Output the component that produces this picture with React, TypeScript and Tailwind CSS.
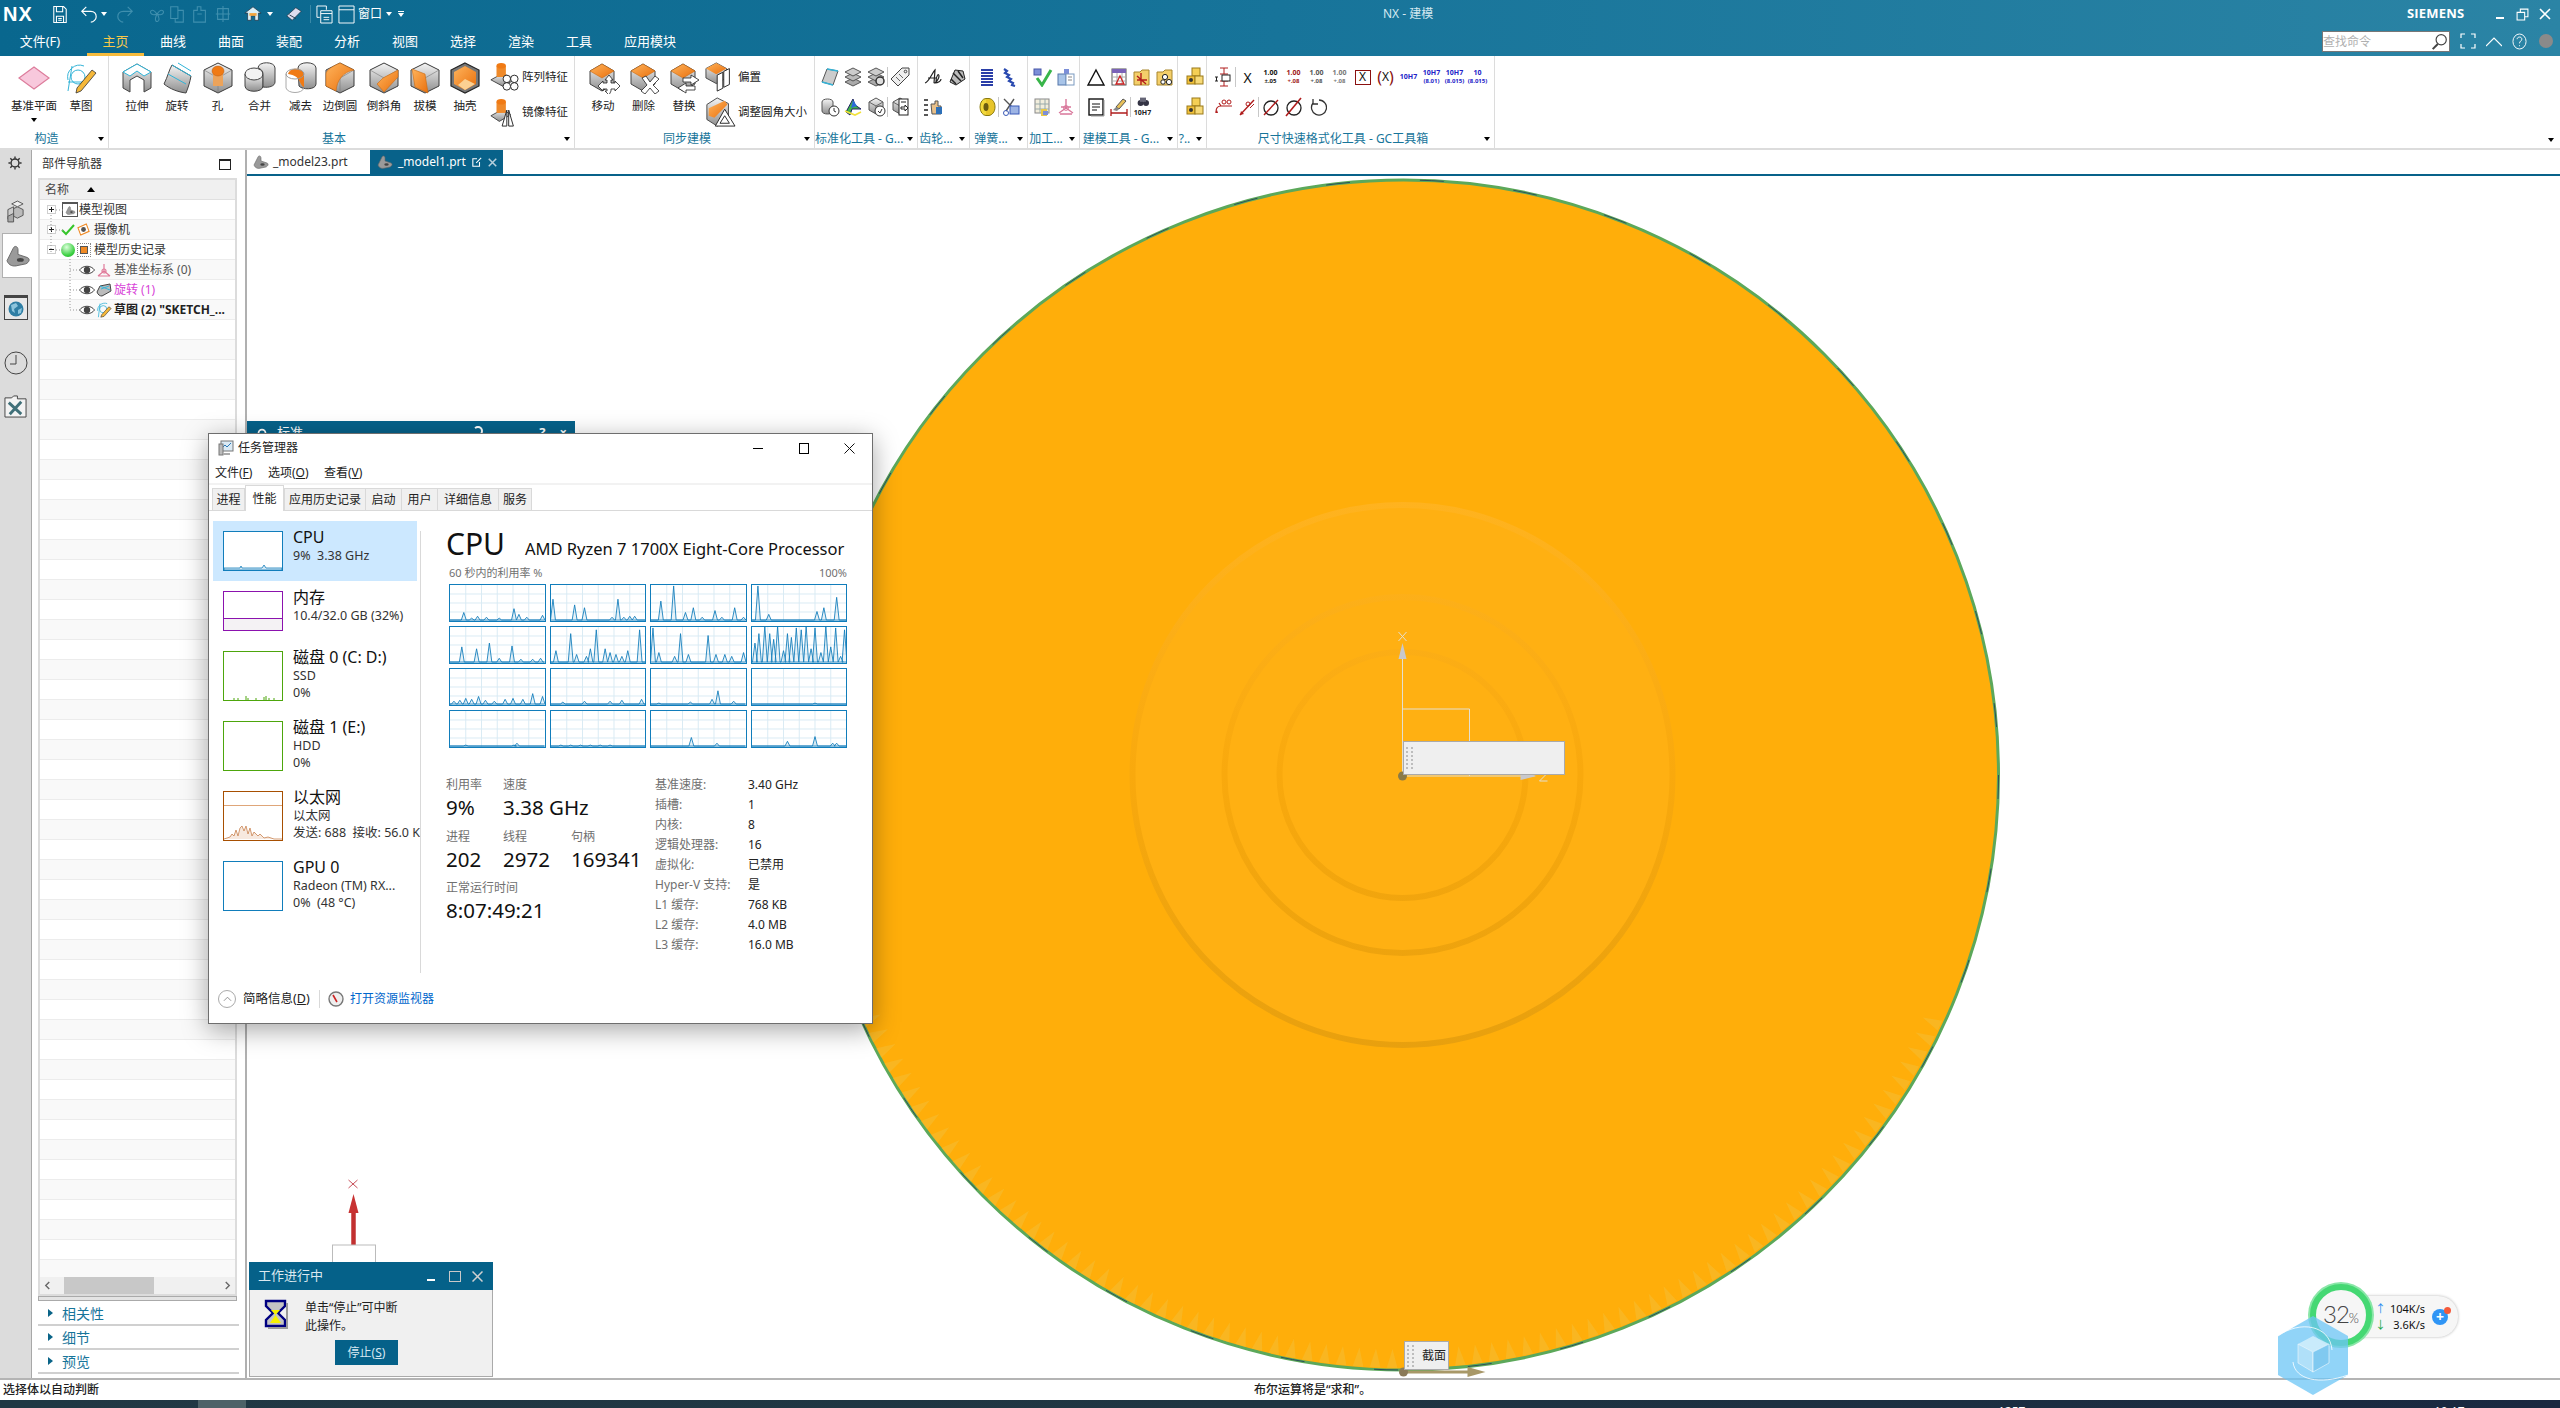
import type { ReactNode } from "react";

const Arrow = ({ className = "border-t-black" }: { className?: string }) => (
  <span className={`block w-0 h-0 border-x-[3px] border-x-transparent border-t-[4px] ${className}`} />
);

const Sep = () => <div className="w-px h-[20px] bg-[#c8c8c8] self-center" />;

const Large = ({ children, className = "w-[34px] h-[32px]" }: { children: ReactNode; className?: string }) => (
  <svg viewBox="0 0 34 32" className={className} fill="none">
    {children}
  </svg>
);

const HEX = "17,1 31,8 31,24 17,31 3,24 3,8";

const Hex = ({ children }: { children?: ReactNode }) => (
  <>
    <polygon points={HEX} fill="url(#gry)" stroke="#3a3a3a" />
    <polyline points="3,8 17,16 31,8" stroke="#777" strokeWidth="0.6" />
    <line x1="17" y1="16" x2="17" y2="31" stroke="#777" strokeWidth="0.6" />
    {children}
  </>
);

const OrangeCube = ({ children }: { children?: ReactNode }) => (
  <>
    <polygon points="16,2 28,9 28,22 16,29 4,22 4,9" fill="url(#gry)" stroke="#444" />
    <polygon points="16,2 28,9 16,16 4,9" fill="url(#org)" stroke="#c96a10" strokeWidth="0.6" />
    {children}
  </>
);

const icons: Record<string, ReactNode> = {
  plane: <polygon points="2,16 17,5 32,16 17,27" fill="#f8c8dc" stroke="#dd7d9c" strokeWidth="1.2" />,
  sketch: (
    <>
      <path d="M4 18 A12 12 0 0 1 20 4 M8 4 L4 29 M4 20 L22 20" stroke="#35b4d8" strokeWidth="1" />
      <circle cx="14" cy="15" r="7" stroke="#35b4d8" />
      <path d="M28 8 L32 11 L17 29 L12 31 L13 26 Z" fill="#f5b83a" stroke="#333" strokeWidth="0.8" />
    </>
  ),
  extrude: (
    <>
      <path d="M3 10 L17 2 L31 10 V26 L24 30 V18 L17 14 L10 18 V30 L3 26Z" fill="url(#gry)" stroke="#444" />
      <path d="M3 10 L17 2 L31 10 L24 14 L17 9 L10 14Z" fill="#fff" stroke="#2fb4d8" />
    </>
  ),
  revolve: (
    <>
      <path d="M4 22 C8 14 9 8 12 3 L31 14 C30 20 28 26 26 31 C18 30 10 27 4 22Z" fill="url(#gry)" stroke="#444" />
      <path d="M12 3 L31 14 M8 12 L26 22 M18 1 L31 9" stroke="#2fb4d8" />
    </>
  ),
  hole: (
    <Hex>
      <rect x="12" y="9" width="10" height="15" fill="#eca35a" />
      <ellipse cx="17" cy="9" rx="6" ry="5" fill="#f07a14" stroke="#b85a10" strokeWidth="0.5" />
    </Hex>
  ),
  unite: (
    <>
      <path d="M2 12 V24 C2 31 20 31 20 24 V12 Z" fill="url(#gry)" stroke="#444" />
      <ellipse cx="11" cy="12" rx="9" ry="6" fill="#f2f2f2" stroke="#444" />
      <path d="M15 6 C15 -1 32 -1 32 6 V20 C32 24 26 26 20 25 V12 C20 9 18 7 15 6Z" fill="url(#gry)" stroke="#444" />
    </>
  ),
  subtract: (
    <>
      <path d="M14 6 C14 -1 32 -1 32 6 V22 C32 28 18 28 15 24Z" fill="url(#gry)" stroke="#444" />
      <path d="M4 12 C6 5 18 5 20 12 V25 C14 22 18 14 4 12Z" fill="#f07a14" />
      <path d="M2 12 V26 C4 32 18 32 20 26" stroke="#aaa" />
      <ellipse cx="11" cy="12" rx="9" ry="5" stroke="#999" />
    </>
  ),
  blend: (
    <Hex>
      <path d="M3 24 V12 C3 8 10 4 17 1 L31 8 C20 10 14 18 13 29Z" fill="url(#org)" stroke="#c96a10" strokeWidth="0.6" />
    </Hex>
  ),
  chamfer: (
    <Hex>
      <polygon points="16,16 31,8 31,15 17,30 10,22" fill="url(#org)" stroke="#c96a10" strokeWidth="0.6" />
    </Hex>
  ),
  draft: (
    <Hex>
      <polygon points="4,7 17,12 20,31 7,25" fill="url(#org)" stroke="#c96a10" strokeWidth="0.6" />
    </Hex>
  ),
  shell: (
    <>
      <polygon points={HEX} fill="#777" stroke="#222" strokeWidth="1.2" />
      <polygon points="17,4 28,10 28,22 17,28 6,22 6,10" fill="url(#org)" />
      <polygon points="10,23 17,17 27,22 17,28" fill="#fbd193" />
    </>
  ),
  pattern: (
    <>
      <polygon points="3,19 16,12 28,19 16,26" fill="url(#gry)" stroke="#444" />
      <rect x="9" y="4" width="10" height="12" fill="#ef8a2a" />
      <ellipse cx="14" cy="4" rx="5" ry="3" fill="#f07a14" />
      <circle cx="20" cy="18" r="4" fill="#fff" stroke="#222" />
      <circle cx="28" cy="18" r="4" fill="#fff" stroke="#222" />
      <circle cx="20" cy="26" r="4" fill="#fff" stroke="#222" />
      <circle cx="28" cy="26" r="4" fill="#fff" stroke="#222" />
    </>
  ),
  mirror: (
    <>
      <polygon points="3,20 16,13 24,19 12,26" fill="url(#gry)" stroke="#444" />
      <rect x="9" y="5" width="10" height="12" fill="#ef8a2a" />
      <ellipse cx="14" cy="5" rx="5" ry="3" fill="#f07a14" />
      <polygon points="20,14 15,31 20,31" fill="#fff" stroke="#222" />
      <polygon points="22,14 27,31 22,31" fill="#fff" stroke="#222" />
    </>
  ),
  move: (
    <OrangeCube>
      <path d="M23 13 L27 18 H25 V21 H29 V19 L34 24 L29 29 V27 H25 V29 L23 33 L19 29 H21 V27 H17 V29 L12 24 L17 19 V21 H21 V18 H19Z" fill="#fff" stroke="#222" strokeWidth="0.8" />
    </OrangeCube>
  ),
  remove: (
    <OrangeCube>
      <path d="M15 16 L19 14 L23 20 L28 14 L32 17 L26 23 L32 29 L28 32 L23 26 L18 32 L14 29 L20 23Z" fill="#fff" stroke="#222" strokeWidth="0.8" />
    </OrangeCube>
  ),
  replace: (
    <OrangeCube>
      <path d="M24 13 L32 18 L24 23 V20 H16 V16 H24Z" fill="#fff" stroke="#222" strokeWidth="0.8" />
      <path d="M19 21 V24 H28 V28 H19 V31 L11 26Z" fill="#fff" stroke="#222" strokeWidth="0.8" />
    </OrangeCube>
  ),
  offset: (
    <>
      <polygon points="13,1 24,7 24,17 13,23 2,17 2,7" fill="url(#gry)" stroke="#444" />
      <polygon points="13,1 24,7 13,13 2,7" fill="url(#org)" />
      <path d="M14 14 L20 11 V28 L14 31Z" fill="#fff" stroke="#222" />
      <path d="M21 10 L27 7 V24 L21 27Z" fill="#fff" stroke="#222" />
    </>
  ),
  resize: (
    <>
      <polygon points="14,1 26,7 26,24 14,31 3,24 3,8" fill="url(#gry)" stroke="#444" />
      <path d="M5 12 L22 4 L25 8 L11 22 L5 20Z" fill="url(#org)" />
      <polygon points="22,13 33,31 12,31" fill="#fff" stroke="#222" />
      <polygon points="22,20 27,28 17,28" stroke="#222" />
    </>
  ),
};

const Small = ({ children, className = "w-[20px] h-[20px]" }: { children: ReactNode; className?: string }) => (
  <svg viewBox="0 0 20 20" className={className} fill="none">
    {children}
  </svg>
);

const cubeGray = (
  <>
    <polygon points="10,1 17,5 17,13 10,17 3,13 3,5" fill="url(#gry)" stroke="#555" />
    <polyline points="3,5 10,9 17,5" stroke="#666" />
    <line x1="10" y1="9" x2="10" y2="17" stroke="#666" />
  </>
);

const stack = (
  <>
    <polygon points="10,11 18,15 10,19 2,15" fill="#aaa" stroke="#555" />
    <polygon points="10,6 18,10 10,14 2,10" fill="#bbb" stroke="#555" />
    <polygon points="10,1 18,5 10,9 2,5" fill="#ccc" stroke="#555" />
  </>
);

const folder = <path d="M2 5 H8 L10 3 H17 V18 H2Z" fill="#f4cf6a" stroke="#a8862c" />;

const yellowCubes = (
  <>
    <rect x="8" y="1" width="8" height="8" fill="#f4cf55" stroke="#9a7a1a" />
    <rect x="3" y="9" width="8" height="8" fill="#f2c13a" stroke="#9a7a1a" />
    <rect x="11" y="9" width="8" height="8" fill="#f7da78" stroke="#9a7a1a" />
    <circle cx="7" cy="13" r="2" fill="#333" />
  </>
);

const sm: Record<string, ReactNode> = {
  s1: (
    <>
      <polygon points="7,2 18,4 13,18 2,15" fill="#ccc" stroke="#555" />
      <path d="M7 2 L18 4 M2 15 L13 18" stroke="#35b4d8" strokeWidth="1.5" />
    </>
  ),
  s2: stack,
  s3: (
    <>
      {stack}
      <circle cx="14" cy="14" r="4" fill="#ddd" stroke="#333" strokeWidth="1.5" />
    </>
  ),
  s4: (
    <>
      <path d="M12 1 H19 V8 L8 19 L1 12Z" fill="#eee" stroke="#444" />
      <path d="M9 7 L13 11 M6 10 L10 14" stroke="#666" />
      <circle cx="15.5" cy="4.5" r="1.3" stroke="#444" />
    </>
  ),
  s5: (
    <>
      <path d="M2 5 C2 1 13 1 13 5 V14 C13 18 2 18 2 14Z" fill="url(#gry)" stroke="#555" />
      <circle cx="14" cy="14" r="5" fill="#fff" stroke="#333" />
      <path d="M14 11 V14 L16 15" stroke="#333" />
    </>
  ),
  s6: (
    <>
      <path d="M3 15 L10 2 L12 8 L18 12 L9 12 L7 18Z" fill="#3fb54a" stroke="#226" />
      <path d="M10 3 L14 9 L8 11Z" fill="#2a6bd8" />
      <path d="M2 14 L12 18 L18 15" stroke="#f2e23c" strokeWidth="1.6" />
    </>
  ),
  s7: (
    <>
      {cubeGray}
      <circle cx="14" cy="14" r="5" fill="#fff" stroke="#333" />
      <path d="M12 14 L14 16 L16 12" stroke="#333" />
    </>
  ),
  s8: (
    <>
      {cubeGray}
      <rect x="9" y="2" width="9" height="16" fill="#fff" stroke="#222" />
      <path d="M11 10 H15 V8 L18 11 L15 14 V12 H11Z" fill="#fff" stroke="#222" />
      <path d="M11 5 H16" stroke="#222" />
    </>
  ),
  g1: <path d="M2 16 C6 15 9 6 12 3 L11 16 M5 11 H13 M13 15 C13 8 16 6 16 9 C16 12 13 15 12 16 C15 16 18 14 18 12" stroke="#222" strokeWidth="1.2" />,
  g2: (
    <>
      <path d="M4 15 L9 3 L17 4 L19 12 L10 18Z" fill="#bbb" stroke="#222" />
      <path d="M7 6 L15 14 M12 4 L17 11 M5 12 L10 17" stroke="#222" strokeWidth="1.5" />
    </>
  ),
  g3: (
    <>
      <path d="M1 3 H5 M1 8 H5 M1 13 H5 M1 18 H5" stroke="#222" strokeWidth="1.4" />
      <path d="M8 7 H12 V4 H15 V9 H18 V17 H9Z" fill="#e8c08a" stroke="#555" />
      <rect x="13" y="10" width="6" height="7" fill="#2d70b8" />
    </>
  ),
  sp1: <path d="M4 3 H16 M4 6 H16 M4 9 H16 M4 12 H16 M4 15 H16 M4 18 H16" stroke="#2a3ea8" strokeWidth="1.8" />,
  sp2: <path d="M4 2 L7 4 L5 6 L9 8 L7 10 L11 12 L9 14 L13 16 L12 18 L15 19" stroke="#2a4ab0" strokeWidth="2.2" />,
  sp3: (
    <>
      <ellipse cx="9" cy="10" rx="6" ry="8.5" fill="#f2d83a" stroke="#8a7a10" />
      <path d="M9 1.5 H12 C16 2 18 6 18 10 C18 15 15 18 12 18.5 H9" fill="#e8c52a" stroke="#8a7a10" />
      <ellipse cx="9" cy="10" rx="2.5" ry="4" fill="#6a5a10" />
    </>
  ),
  sp4: (
    <>
      <path d="M3 2 L17 16 M13 2 L5 14" stroke="#555" strokeWidth="1.4" />
      <rect x="9" y="9" width="9" height="8" fill="#9db4e4" stroke="#3a5ab8" />
      <circle cx="5" cy="16" r="2.5" stroke="#3a5ab8" />
    </>
  ),
  m1: (
    <>
      <rect x="1" y="2" width="7" height="6" fill="#7c8fd8" stroke="#4656a8" />
      <path d="M4 11 L9 18 L18 3" stroke="#39b54a" strokeWidth="3" />
    </>
  ),
  m2: (
    <>
      <rect x="2" y="7" width="8" height="11" fill="#a8c4e8" stroke="#5577aa" />
      <rect x="8" y="2" width="5" height="5" fill="#7c8fd8" />
      <rect x="10" y="7" width="8" height="11" fill="#fff" stroke="#7a9ac0" />
      <path d="M12 10 H16 M12 13 H16" stroke="#888" />
    </>
  ),
  m3: (
    <>
      <rect x="2" y="2" width="14" height="14" fill="#f2eedd" stroke="#888" />
      <path d="M2 7 H16 M2 12 H16 M7 2 V16 M12 2 V16" stroke="#9aa" />
      <rect x="8" y="12" width="6" height="7" fill="#e8c94a" />
      <rect x="10" y="14" width="5" height="4" fill="#7c8fd8" />
    </>
  ),
  m4: (
    <>
      <path d="M10 2 V11 L3 16 M10 11 L17 16 M5 10 L15 10 M4 17 H16" stroke="#d9779b" strokeWidth="1.4" />
      <circle cx="10" cy="11" r="2.4" stroke="#d9779b" />
    </>
  ),
  a1: <polygon points="10,3 18,18 2,18" stroke="#111" strokeWidth="1.4" />,
  a2: (
    <>
      <rect x="3" y="2" width="14" height="16" fill="#fff" stroke="#555" />
      <rect x="3" y="2" width="14" height="4" fill="#7a63b8" />
      <path d="M3 10 H17 M3 14 H17 M8 6 V18 M13 6 V18" stroke="#aaa" />
      <polygon points="11,9 15,17 7,17" stroke="#c22" strokeWidth="1.3" />
    </>
  ),
  a3: (
    <>
      {folder}
      <path d="M9 6 V18 M5 13 H15 M5 9 L14 17" stroke="#b21c1c" strokeWidth="1.4" />
    </>
  ),
  a4: (
    <>
      {folder}
      <circle cx="10" cy="10" r="2.6" fill="#fff" stroke="#222" />
      <circle cx="14" cy="15" r="2.6" fill="#fff" stroke="#222" />
      <circle cx="8" cy="15" r="2.2" fill="#fff" stroke="#222" />
    </>
  ),
  a5: (
    <>
      <rect x="3" y="2" width="14" height="16" fill="#fff" stroke="#111" strokeWidth="1.4" />
      <path d="M6 7 H14 M6 10 H14 M6 13 H11" stroke="#111" />
      <path d="M18 3 V19 H5" stroke="#999" />
    </>
  ),
  a6: (
    <>
      <path d="M14 2 L17 4 L10 12 L7 10Z" fill="#e8c05a" stroke="#555" />
      <path d="M7 10 L10 12 L8 14 L4 13Z" fill="#888" />
      <path d="M2 12 V19 M18 12 V19 M2 16 H18" stroke="#b01c1c" strokeWidth="1.3" />
    </>
  ),
  q: yellowCubes,
  d1: (
    <>
      <path d="M6 1 H14 M6 7 H14 M10 1 V7 M6 14 H14 M6 19 H14 M10 14 V19" stroke="#b01c1c" />
      <rect x="8" y="8" width="8" height="6" fill="#fff" stroke="#222" />
      <path d="M1 10 H4 M1 14 H4 M2.5 10 V14" stroke="#222" />
    </>
  ),
  d2: (
    <>
      <path d="M2 15 C2 10 4 9 7 9 H18 M7 9 L5 6" stroke="#b01c1c" strokeWidth="1.2" />
      <path d="M3 13 L1 16 L4 16Z" fill="#b01c1c" />
      <circle cx="10" cy="5" r="2" stroke="#b01c1c" />
      <circle cx="15" cy="5" r="2" stroke="#b01c1c" />
    </>
  ),
  d3: (
    <>
      <path d="M3 18 L17 3" stroke="#b01c1c" strokeWidth="1.4" />
      <path d="M3 18 L7 17 L4 14Z" fill="#b01c1c" />
      <circle cx="11" cy="7" r="2" stroke="#b01c1c" />
      <path d="M13 11 L17 7" stroke="#b01c1c" />
    </>
  ),
  d4: (
    <>
      <circle cx="10" cy="11" r="7" stroke="#222" strokeWidth="1.3" />
      <path d="M3 18 L17 3" stroke="#b01c1c" strokeWidth="1.4" />
    </>
  ),
  d5: (
    <>
      <circle cx="10" cy="11" r="7" stroke="#222" strokeWidth="1.3" />
      <path d="M2 19 L17 1" stroke="#b01c1c" strokeWidth="1.6" />
    </>
  ),
  d6: <path d="M6 6 A7.5 7.5 0 1 0 12 3 M6 2 L6 7 L11 7" stroke="#333" strokeWidth="1.3" />,
};

const SmallCell = ({ name }: { name: string }) => (
  <div className="w-[23px] h-[30px] flex items-center justify-center shrink-0">
    <Small>{sm[name]}</Small>
  </div>
);

const TextCell = ({ top, bottom, className }: { top: string; bottom?: string; className: string }) => (
  <div className="w-[23px] h-[30px] shrink-0 flex flex-col items-center justify-center text-[7px] leading-[8px] font-bold">
    <span className={className}>{top}</span>
    {bottom && <span className={`${className} text-[6px]`}>{bottom}</span>}
  </div>
);

const Group = ({ width, label, children }: { width: string; label: string; children: ReactNode }) => (
  <div className={`${width} shrink-0 flex flex-col relative pt-[6px] border-r border-[#dcdcdc]`}>
    <div className="h-[69px] flex flex-col">{children}</div>
    <div className="h-[18px] flex items-center text-[12px] leading-[18px] text-[#17759a]">
      <span className="flex-1 text-center whitespace-nowrap">{label}</span>
      <span className="w-[15px] flex justify-center">
        <Arrow />
      </span>
    </div>
  </div>
);

const LargeBtn = ({ w, icon, label }: { w: string; icon: string; label: string }) => (
  <div className={`${w} flex flex-col items-center shrink-0`}>
    <Large>{icons[icon]}</Large>
    <span className="mt-[4px] h-[16px] text-[11.5px] leading-[16px] text-[#222] whitespace-nowrap">{label}</span>
  </div>
);

const SideBtn = ({ icon, label }: { icon: string; label: string }) => (
  <div className="h-[35px] flex items-center whitespace-nowrap">
    <Large className="w-[32px] h-[30px] shrink-0">{icons[icon]}</Large>
    <span className="ml-[2px] text-[11.5px] text-[#222]">{label}</span>
  </div>
);

function Ribbon() {
  return (
    <div className="h-[94px] shrink-0 bg-white border-b-2 border-[#dcdcdc] flex">
      <Group width="w-[109px]" label="构造">
        <div className="flex">
          <div className="w-[68px] flex flex-col items-center">
            <Large>{icons.plane}</Large>
            <span className="mt-[4px] h-[16px] text-[11.5px] leading-[16px] text-[#222]">基准平面</span>
            <span className="mt-[4px]">
              <Arrow />
            </span>
          </div>
          <LargeBtn w="w-[26px]" icon="sketch" label="草图" />
        </div>
      </Group>
      <Group width="w-[466px]" label="基本">
        <div className="flex pl-[8px]">
          <LargeBtn w="w-[40px]" icon="extrude" label="拉伸" />
          <LargeBtn w="w-[40px]" icon="revolve" label="旋转" />
          <LargeBtn w="w-[41px]" icon="hole" label="孔" />
          <LargeBtn w="w-[43px]" icon="unite" label="合并" />
          <LargeBtn w="w-[39px]" icon="subtract" label="减去" />
          <LargeBtn w="w-[40px]" icon="blend" label="边倒圆" />
          <LargeBtn w="w-[48px]" icon="chamfer" label="倒斜角" />
          <LargeBtn w="w-[34px]" icon="draft" label="拔模" />
          <LargeBtn w="w-[46px]" icon="shell" label="抽壳" />
          <div className="flex flex-col -mt-[3px]">
            <SideBtn icon="pattern" label="阵列特征" />
            <SideBtn icon="mirror" label="镜像特征" />
          </div>
        </div>
      </Group>
      <Group width="w-[240px]" label="同步建模">
        <div className="flex pl-[8px]">
          <LargeBtn w="w-[40px]" icon="move" label="移动" />
          <LargeBtn w="w-[41px]" icon="remove" label="删除" />
          <LargeBtn w="w-[40px]" icon="replace" label="替换" />
          <div className="flex flex-col -mt-[3px]">
            <SideBtn icon="offset" label="偏置" />
            <SideBtn icon="resize" label="调整圆角大小" />
          </div>
        </div>
      </Group>
      <Group width="w-[103px]" label="标准化工具 - G...">
        <div className="flex pl-[3px]">
          <SmallCell name="s1" />
          <SmallCell name="s2" />
          <SmallCell name="s3" />
          <Sep />
          <SmallCell name="s4" />
        </div>
        <div className="flex pl-[3px]">
          <SmallCell name="s5" />
          <SmallCell name="s6" />
          <SmallCell name="s7" />
          <Sep />
          <SmallCell name="s8" />
        </div>
      </Group>
      <Group width="w-[52px]" label="齿轮...">
        <div className="flex pl-[3px]">
          <SmallCell name="g1" />
          <SmallCell name="g2" />
        </div>
        <div className="flex pl-[3px]">
          <SmallCell name="g3" />
        </div>
      </Group>
      <Group width="w-[58px]" label="弹簧...">
        <div className="flex pl-[5px]">
          <SmallCell name="sp1" />
          <SmallCell name="sp2" />
        </div>
        <div className="flex pl-[5px]">
          <SmallCell name="sp3" />
          <Sep />
          <SmallCell name="sp4" />
        </div>
      </Group>
      <Group width="w-[52px]" label="加工...">
        <div className="flex pl-[3px]">
          <SmallCell name="m1" />
          <SmallCell name="m2" />
        </div>
        <div className="flex pl-[3px]">
          <SmallCell name="m3" />
          <SmallCell name="m4" />
        </div>
      </Group>
      <Group width="w-[98px]" label="建模工具 - G...">
        <div className="flex pl-[4px]">
          <SmallCell name="a1" />
          <SmallCell name="a2" />
          <SmallCell name="a3" />
          <SmallCell name="a4" />
        </div>
        <div className="flex pl-[4px]">
          <SmallCell name="a5" />
          <SmallCell name="a6" />
          <Sep />
          <div className="w-[23px] h-[30px] flex flex-col items-center justify-center">
            <Small className="w-[14px] h-[12px]">
              <circle cx="6" cy="10" r="5" fill="#334" />
              <circle cx="15" cy="10" r="5" fill="#334" />
              <rect x="5" y="1" width="10" height="7" fill="#667" />
            </Small>
            <span className="text-[7px] leading-[8px] font-bold text-[#222]">10H7</span>
          </div>
        </div>
      </Group>
      <Group width="w-[29px]" label="?..">
        <div className="flex pl-[4px]">
          <SmallCell name="q" />
        </div>
        <div className="flex pl-[4px]">
          <SmallCell name="q" />
        </div>
      </Group>
      <Group width="w-[288px]" label="尺寸快速格式化工具 - GC工具箱">
        <div className="flex pl-[5px]">
          <SmallCell name="d1" />
          <Sep />
          <div className="w-[23px] h-[30px] flex items-center justify-center text-[14px] text-[#111]">X</div>
          <TextCell top="1.00" bottom="±.05" className="text-[#111]" />
          <TextCell top="1.00" bottom="+.08" className="text-[#a01818]" />
          <TextCell top="1.00" bottom="+.08" className="text-[#555]" />
          <TextCell top="1.00" bottom="+.08" className="text-[#777]" />
          <div className="w-[23px] h-[30px] flex items-center justify-center">
            <div className="w-[16px] h-[15px] border border-[#8a1010] flex items-center justify-center text-[12px] text-[#111]">X</div>
          </div>
          <div className="w-[23px] h-[30px] flex items-center justify-center text-[12px] text-[#111]">
            <span className="text-[#8a1010] text-[16px] leading-none">(</span>X<span className="text-[#8a1010] text-[16px] leading-none">)</span>
          </div>
          <TextCell top="10H7" className="text-[#2222c8]" />
          <TextCell top="10H7" bottom="(8.01)" className="text-[#2222c8]" />
          <TextCell top="10H7" bottom="(8.015)" className="text-[#2222c8]" />
          <TextCell top="10" bottom="(8.015)" className="text-[#2222c8]" />
        </div>
        <div className="flex pl-[5px]">
          <SmallCell name="d2" />
          <SmallCell name="d3" />
          <Sep />
          <SmallCell name="d4" />
          <SmallCell name="d5" />
          <SmallCell name="d6" />
        </div>
      </Group>
      <div className="flex-1 flex items-end justify-end pr-[6px] pb-[6px]">
        <Arrow />
      </div>
    </div>
  );
}

const PartIcon = ({ className = "w-[16px] h-[14px]" }: { className?: string }) => (
  <svg viewBox="0 0 16 14" className={className}>
    <path d="M1 10 L5 2 C6 0 8 1 8 3 L8 6 L14 8 C16 9 15 11 13 12 L8 13 C5 14 2 13 1 10Z" fill="#9a9a9a" stroke="#666" strokeWidth="0.6" />
    <ellipse cx="9.5" cy="9.5" rx="2.2" ry="1.2" fill="#444" />
  </svg>
);

function TitleBar() {
  const dim = "stroke-[#3f8fae]";
  return (
    <div className="h-[56px] shrink-0 bg-[linear-gradient(90deg,#09678e,#17749a_50%,#2b84a5)] text-white">
      <div className="h-[28px] flex items-center">
        <span className="w-[52px] pl-[3px] text-[20px] font-bold leading-none tracking-[1px] font-['Liberation_Sans',sans-serif]">NX</span>
        <div className="w-[1331px] flex items-center relative h-full">
          <svg viewBox="0 0 18 20" className="w-[16px] h-[19px]" fill="none" stroke="#fff" strokeWidth="1.2">
            <path d="M2 1 H13 L16 4 V19 H2Z M5 1 V7 H12 V1 M5 12 H13 V19 H5Z M7 14.5 H11 M7 16.5 H11" />
          </svg>
          <svg viewBox="0 0 20 20" className="w-[18px] h-[18px] ml-[12px]" fill="none" stroke="#fff" strokeWidth="1.3">
            <path d="M7 2 L2 7 L7 12 M2 7 H12 C16 7 18 10 18 13 C18 16 15 19 12 19" />
          </svg>
          <span className="ml-[3px]"><Arrow className="border-t-white" /></span>
          <svg viewBox="0 0 20 20" className={`w-[18px] h-[18px] ml-[9px] ${dim}`} fill="none" strokeWidth="1.3">
            <path d="M13 2 L18 7 L13 12 M18 7 H8 C4 7 2 10 2 13 C2 16 5 19 8 19" />
          </svg>
          <svg viewBox="0 0 20 20" className={`w-[18px] h-[18px] ml-[14px] ${dim}`} fill="none" strokeWidth="1.2">
            <path d="M10 10 C4 2 1 8 4 10 C7 12 9 10 10 10 C16 2 19 8 16 10 C13 12 11 10 10 10 C6 18 10 20 12 17 C13 15 11 11 10 10" />
          </svg>
          <svg viewBox="0 0 20 20" className={`w-[18px] h-[18px] ml-[2px] ${dim}`} fill="none" strokeWidth="1.2">
            <path d="M3 2 H11 V15 H3Z M11 6 H17 V19 H8 V15" />
          </svg>
          <svg viewBox="0 0 20 20" className={`w-[18px] h-[18px] ml-[5px] ${dim}`} fill="none" strokeWidth="1.2">
            <path d="M3 6 H7 V2 H11 V6 H16 V19 H3Z M7 10 H12" />
          </svg>
          <svg viewBox="0 0 20 20" className={`w-[18px] h-[18px] ml-[5px] ${dim}`} fill="none" strokeWidth="1.2">
            <path d="M10 1 V19 M2 10 H18 M4 4 H16 V16 H4Z" />
          </svg>
          <svg viewBox="0 0 20 20" className="w-[18px] h-[18px] ml-[12px]">
            <path d="M10 2 L19 9 L16 9 V17 H12 V12 H8 V17 H4 V9 H1Z" fill="#d8eef6" stroke="#234" strokeWidth="0.8" />
            <path d="M6 9 H14 V12 H6Z" fill="#f2a33c" />
          </svg>
          <span className="ml-[5px]"><Arrow className="border-t-white" /></span>
          <svg viewBox="0 0 20 20" className="w-[18px] h-[18px] ml-[12px]">
            <path d="M2 12 L12 3 L18 7 L8 17Z" fill="#dde" stroke="#234" strokeWidth="0.8" />
            <path d="M5 11 L12 15" stroke="#234" />
          </svg>
          <div className="w-px h-[18px] bg-[#3a8aa8] ml-[7px]" />
          <svg viewBox="0 0 18 20" className="w-[17px] h-[19px] ml-[5px]" fill="none" stroke="#fff">
            <path d="M1 1 H11 V5 M1 1 V13 H4 M5 6 H17 V19 H5Z M5 9 H17 M8 13 H14 M8 15.5 H14" />
          </svg>
          <svg viewBox="0 0 18 20" className="w-[17px] h-[19px] ml-[5px]" fill="none" stroke="#fff">
            <path d="M1 1 H17 V19 H1Z M1 5 H17" />
          </svg>
          <span className="ml-[3px] text-[12px]">窗口</span>
          <span className="ml-[4px]"><Arrow className="border-t-white" /></span>
          <span className="ml-[6px] flex flex-col items-center gap-[1px]">
            <span className="w-[6px] h-px bg-white" />
            <Arrow className="border-t-white" />
          </span>
        </div>
        <span className="w-[55px] text-[12px] text-[#d4e8f0] whitespace-nowrap">NX - 建模</span>
        <span className="ml-[969px] w-[64px] text-[13px] font-bold font-['Open_Sans',sans-serif] tracking-[0.2px]">SIEMENS</span>
        <div className="ml-[25px] flex items-center text-white">
          <span className="w-[8px] h-[2px] bg-white mt-[7px]" />
          <svg viewBox="0 0 12 12" className="w-[13px] h-[13px] ml-[12px]" fill="none" stroke="#fff" strokeWidth="1">
            <path d="M1 4 H8 V11 H1Z M4 4 V1 H11 V8 H8" />
          </svg>
          <svg viewBox="0 0 12 12" className="w-[12px] h-[12px] ml-[10px]" fill="none" stroke="#fff" strokeWidth="1.6">
            <path d="M1 1 L11 11 M11 1 L1 11" />
          </svg>
        </div>
      </div>
      <div className="h-[28px] flex items-start text-[13px] leading-[26px]">
        <span className="w-[87px] pr-[7px] text-center">文件(F)</span>
        <span className="w-[57px] h-[28px] text-center text-[#f8c84a] border-b-[3px] border-[#f6bb3c]">主页</span>
        {["曲线", "曲面", "装配", "分析", "视图", "选择", "渲染", "工具"].map((t) => (
          <span key={t} className="w-[58px] text-center">{t}</span>
        ))}
        <span className="w-[84px] text-center">应用模块</span>
        <div className="ml-[1630px] mt-[3px] w-[128px] h-[21px] bg-white border border-[#777] flex items-center justify-between pr-[1px]">
          <span className="text-[12px] leading-none text-[#b0b0b0]">查找命令</span>
          <svg viewBox="0 0 20 20" className="w-[17px] h-[17px]" fill="none" stroke="#444" strokeWidth="1.4">
            <circle cx="12" cy="8" r="6" />
            <path d="M8 13 L2 19" strokeWidth="2.4" />
          </svg>
        </div>
        <svg viewBox="0 0 16 16" className="w-[16px] h-[16px] ml-[10px] mt-[5px]" fill="none" stroke="#fff" strokeWidth="1.2">
          <path d="M1 5 V1 H5 M11 1 H15 V5 M15 11 V15 H11 M5 15 H1 V11" />
        </svg>
        <svg viewBox="0 0 16 10" className="w-[16px] h-[10px] ml-[10px] mt-[9px]" fill="none" stroke="#fff" strokeWidth="1.2">
          <path d="M0 9 L8 1 L16 9" />
        </svg>
        <svg viewBox="0 0 16 18" className="w-[15px] h-[17px] ml-[10px] mt-[5px]" fill="none" stroke="#fff" strokeWidth="1">
          <ellipse cx="8" cy="9" rx="7" ry="8" />
          <path d="M5.5 6.5 C5.5 3.5 10.5 3.5 10.5 6.5 C10.5 8.5 8 8.5 8 11 M8 13 V14" />
        </svg>
        <span className="w-[14px] h-[14px] ml-[12px] mt-[6px] rounded-full bg-[#8a8a8a]" />
      </div>
    </div>
  );
}

function LeftStrip() {
  return (
    <div className="w-[32px] shrink-0 bg-[#dcdcdc] border-r border-[#a8a8a8] flex flex-col items-center">
      <svg viewBox="0 0 16 16" className="w-[14px] h-[14px] mt-[6px] mr-[1px]" fill="none" stroke="#333" strokeWidth="1.6">
        <circle cx="8" cy="8" r="4.5" />
        <path d="M8 0.5 V3 M8 13 V15.5 M0.5 8 H3 M13 8 H15.5 M2.7 2.7 L4.5 4.5 M11.5 11.5 L13.3 13.3 M2.7 13.3 L4.5 11.5 M11.5 4.5 L13.3 2.7" />
      </svg>
      <svg viewBox="0 0 20 24" className="w-[19px] h-[23px] mt-[30px]">
        <polygon points="6,10 12,7 18,10 18,16 12,19 6,16" fill="#bbb" stroke="#555" />
        <polygon points="6,4 12,1 18,4 12,7 6,4" fill="#eee" stroke="#555" />
        <polygon points="2,10 8,7 8,17 2,20" fill="#ccc" stroke="#555" />
        <polygon points="2,17 8,14 8,23 2,23" fill="#aaa" stroke="#555" />
      </svg>
      <div className="mt-[10px] self-end w-[30px] h-[45px] bg-white border-y border-l border-[#b0b0b0] -mr-px flex items-center justify-center">
        <PartIcon className="w-[26px] h-[22px]" />
      </div>
      <div className="mt-[17px] w-[24px] h-[25px] bg-[#e8e8e8] border border-[#444] border-t-[3px] flex items-center justify-center">
        <svg viewBox="0 0 16 16" className="w-[16px] h-[16px]">
          <circle cx="8" cy="8" r="7.5" fill="#2f7ea4" />
          <path d="M3 4 L8 2 L10 5 L6 8 L7 12 L4 10Z M10 9 L14 7 L13 12 L10 13Z" fill="#8cc4dc" />
        </svg>
      </div>
      <svg viewBox="0 0 24 24" className="w-[24px] h-[24px] mt-[31px]" fill="none" stroke="#444" strokeWidth="1">
        <circle cx="12" cy="12" r="11" />
        <path d="M12 4 V13 H6" />
      </svg>
      <svg viewBox="0 0 24 24" className="w-[23px] h-[23px] mt-[20px]">
        <path d="M1 3 H8 L10 1 H14 V4 H23 V23 H1Z" fill="#f3f3f3" stroke="#444" />
        <path d="M5 8 L18 20 M18 7 L6 20" stroke="#3f6f78" strokeWidth="3" />
      </svg>
    </div>
  );
}

const Eye = () => (
  <svg viewBox="0 0 16 12" className="w-[16px] h-[12px] shrink-0">
    <path d="M0.5 6 C4 1 12 1 15.5 6 C12 11 4 11 0.5 6Z" fill="#fff" stroke="#444" />
    <circle cx="8" cy="6" r="3.2" fill="#444" />
  </svg>
);

const Expand = ({ minus }: { minus?: boolean }) => (
  <span className="w-[9px] h-[9px] bg-white border border-[#cfcfcf] flex items-center justify-center text-[10px] leading-none text-[#222] relative shrink-0">
    <span className="w-[5px] h-px bg-[#222]" />
    {!minus && <span className="absolute w-px h-[5px] bg-[#222]" />}
  </span>
);

function Tree() {
  const rowCls = "h-[20px] border-b border-[#ececec] flex items-center text-[12px] leading-none whitespace-nowrap relative";
  return (
    <div className="flex-1 overflow-hidden relative">
      <div className={`${rowCls} pl-[7px]`}>
        <Expand />
        <span className="ml-[6px] w-[16px] h-[15px] bg-white border border-[#555] border-t-[2px] flex items-center justify-center shrink-0">
          <PartIcon className="w-[11px] h-[9px]" />
        </span>
        <span className="ml-[1px] text-[#333]">模型视图</span>
      </div>
      <div className={`${rowCls} pl-[7px] bg-[#f9f9f9]`}>
        <Expand />
        <svg viewBox="0 0 14 12" className="ml-[5px] w-[14px] h-[12px] shrink-0" fill="none" stroke="#35c52a" strokeWidth="2">
          <path d="M1 6 L5 10 L13 1" />
        </svg>
        <svg viewBox="0 0 14 14" className="ml-[2px] w-[13px] h-[13px] shrink-0">
          <polygon points="1,5 10,1 13,9 4,13" fill="#fff" stroke="#f08a24" strokeWidth="1.2" />
          <circle cx="7" cy="7" r="2.6" fill="#555" />
        </svg>
        <span className="ml-[4px] text-[#333]">摄像机</span>
      </div>
      <div className={`${rowCls} pl-[7px]`}>
        <Expand minus />
        <span className="ml-[5px] w-[14px] h-[14px] rounded-full bg-[radial-gradient(circle_at_40%_30%,#dcffdc,#39cf3f_65%,#1f9a28)] shrink-0" />
        <span className="ml-[2px] w-[14px] h-[14px] border border-dotted border-[#888] bg-white flex items-center justify-center shrink-0">
          <span className="w-[8px] h-[8px] bg-[#f08a24] border border-[#555]" />
        </span>
        <span className="ml-[3px] text-[#333]">模型历史记录</span>
      </div>
      <div className={`${rowCls} pl-[39px] bg-[#f9f9f9]`}>
        <Eye />
        <svg viewBox="0 0 16 14" className="ml-[1px] w-[16px] h-[14px] shrink-0" fill="none" stroke="#e07a9a" strokeWidth="1.2">
          <path d="M8 1 V8 L2 13 M8 8 L14 13 M2 13 H14" />
          <circle cx="8" cy="8" r="2" />
        </svg>
        <span className="ml-[2px] text-[#555]">基准坐标系 (0)</span>
      </div>
      <div className={`${rowCls} pl-[39px]`}>
        <Eye />
        <svg viewBox="0 0 16 14" className="ml-[1px] w-[16px] h-[14px] shrink-0">
          <path d="M1 9 L4 3 L14 1 L15 8 L6 13 C4 13 2 12 1 9Z" fill="#bbb" stroke="#444" />
          <path d="M4 3 L14 7 M5 6 L13 3" stroke="#35b4d8" />
        </svg>
        <span className="ml-[2px] text-[#d844d8]">旋转 (1)</span>
      </div>
      <div className={`${rowCls} pl-[39px] bg-[#f9f9f9]`}>
        <Eye />
        <Small className="ml-[1px] w-[16px] h-[16px] shrink-0">
          <path d="M2 11 A9 9 0 0 1 14 2 M5 2 L3 19" stroke="#35b4d8" />
          <circle cx="9" cy="9" r="4.5" stroke="#35b4d8" />
          <path d="M16 6 L19 8 L10 18 L6 19 L7 16Z" fill="#f5b83a" stroke="#333" strokeWidth="0.7" />
        </Small>
        <span className="ml-[2px] font-bold text-[#222]">草图 (2) "SKETCH_...</span>
      </div>
      {Array.from({ length: 54 }, (_, i) => (
        <div key={i} className={`h-[20px] border-b border-[#ececec] ${i % 2 === 1 ? "bg-[#f9f9f9]" : "bg-white"}`} />
      ))}
      <svg className="absolute left-0 top-0 w-[60px] h-[130px]" fill="none" stroke="#999" strokeDasharray="1 2">
        <path d="M11 15 V54 M16 10 H23 M16 30 H23 M16 50 H23 M30 59 V110 H40 M30 70 H40 M30 90 H40" />
      </svg>
    </div>
  );
}

function NavPanel() {
  const sections = ["相关性", "细节", "预览"];
  return (
    <div className="w-[215px] shrink-0 bg-white border-r-2 border-[#b0b0b0] flex flex-col">
      <div className="h-[28px] shrink-0 flex items-center justify-between pl-[10px] pr-[14px] text-[12px] text-[#333]">
        <span>部件导航器</span>
        <span className="w-[12px] h-[11px] border border-[#222] border-t-2" />
      </div>
      <div className="mx-[6px] w-[199px] flex-1 min-h-0 border-2 border-[#dcdcdc] flex flex-col overflow-hidden">
        <div className="h-[20px] shrink-0 bg-[#f0f0f0] border-b border-[#e0e0e0] flex items-center pl-[5px] text-[12px] text-[#444]">
          名称
          <span className="ml-[18px] w-0 h-0 border-x-[4px] border-x-transparent border-b-[5px] border-b-black" />
        </div>
        <Tree />
        <div className="h-[17px] shrink-0 bg-[#f0f0f0] flex items-center justify-between px-[4px]">
          <svg viewBox="0 0 8 10" className="w-[7px] h-[9px]" fill="none" stroke="#666" strokeWidth="1.6"><path d="M6 1 L2 5 L6 9" /></svg>
          <span className="w-[90px] h-full bg-[#c8c8c8] -ml-[58px]" />
          <svg viewBox="0 0 8 10" className="w-[7px] h-[9px]" fill="none" stroke="#666" strokeWidth="1.6"><path d="M2 1 L6 5 L2 9" /></svg>
        </div>
      </div>
      <div className="mx-[6px] w-[199px] h-[5px] shrink-0 bg-[#e4e4e4] border border-[#aaa]" />
      <div className="shrink-0 pb-[4px] pt-[1px]">
        {sections.map((s) => (
          <div key={s} className="mx-[6px] h-[24px] border-b-2 border-[#d0d0d0] flex items-center pl-[10px] text-[14px] text-[#17759a]">
            <span className="w-0 h-0 border-y-[4px] border-y-transparent border-l-[5px] border-l-[#0a6488] mr-[9px]" />
            {s}
          </div>
        ))}
      </div>
    </div>
  );
}

function Canvas() {
  const cx = 1403;
  const cy = 775;
  // small facet slivers along the lower rim of the disc
  const facets = Array.from({ length: 80 }, (_, i) => {
    const a = ((25 + i * 1.65) * Math.PI) / 180;
    const p = (r: number, d: number) => `${cx + r * Math.cos(a + d)},${cy + r * Math.sin(a + d)}`;
    return `${p(593, -0.009)} ${p(574, 0)} ${p(593, 0.009)}`;
  });
  return (
    <svg viewBox="248 176 2312 1202" className="absolute inset-0 w-full h-full">
      <defs>
        <linearGradient id="ring" gradientUnits="userSpaceOnUse" x1="0" y1="500" x2="0" y2="1050">
          <stop offset="0" stopColor="#ffb31f" />
          <stop offset="0.5" stopColor="#f9a90d" />
          <stop offset="1" stopColor="#e8a00e" />
        </linearGradient>
      </defs>
      <circle cx={cx + 1} cy={cy} r="595" fill="#ffae0a" stroke="#5ca85a" strokeWidth="3" />
      <circle cx={cx + 1} cy={cy} r="595" fill="none" stroke="#2f4f5a" strokeWidth="1" strokeDasharray="24 70" />
      {facets.map((pts, i) => (
        <polygon key={i} points={pts} fill="#f2c23e" opacity="0.45" />
      ))}
      <circle cx={cx} cy={cy} r="270" fill="#ffb012" stroke="url(#ring)" strokeWidth="6" />
      <circle cx={cx} cy={cy} r="178" fill="none" stroke="url(#ring)" strokeWidth="6" />
      <circle cx={cx} cy={cy} r="123" fill="none" stroke="url(#ring)" strokeWidth="6" />
      <g stroke="#e4dfd0" strokeWidth="1" fill="none">
        <path d="M1403 655 V776 H1535 M1403 709 H1470 V776" />
        <path d="M1399 632 L1407 641 M1407 632 L1399 641 M1540 773 H1548 L1540 781 H1548" />
      </g>
      <polygon points="1403,643 1399,659 1407,659" fill="#c8c8cc" />
      <polygon points="1537,776 1521,772 1521,780" fill="#c8c8cc" />
      <circle cx="1403" cy="776" r="4.5" fill="#8a7a48" />
      <path d="M1404 1372 H1472" stroke="#a89868" strokeWidth="3" />
      <polygon points="1486,1372 1468,1367 1468,1377" fill="#a89868" />
      <circle cx="1404" cy="1372" r="4.5" fill="#8a7a58" />
      <path d="M349 1180 L358 1188 M358 1180 L349 1188" stroke="#c8505a" />
      <path d="M354 1245 V1208" stroke="#c23030" strokeWidth="4.5" />
      <polygon points="354,1194 349,1213 359,1213" fill="#c83232" />
      <rect x="333" y="1245" width="43" height="30" fill="#fff" stroke="#bbb" />
    </svg>
  );
}

function Graphics() {
  return (
    <div className="flex-1 flex flex-col bg-white min-w-0">
      <div className="h-[26px] shrink-0 border-b-2 border-[#08628a] flex items-stretch text-[12px]">
        <div className="w-[123px] flex items-center pl-[6px] text-[#333]">
          <PartIcon />
          <span className="ml-[4px]">_model23.prt</span>
        </div>
        <div className="w-[133px] bg-[#08628a] flex items-center pl-[7px] text-white">
          <PartIcon />
          <span className="ml-[5px]">_model1.prt</span>
          <svg viewBox="0 0 12 12" className="w-[10px] h-[10px] ml-[6px]" fill="none" stroke="#fff" strokeWidth="1.3">
            <path d="M9 6 V11 H1 V2 H6 M5 7 L11 1" />
          </svg>
          <svg viewBox="0 0 12 12" className="w-[9px] h-[9px] ml-[6px]" fill="none" stroke="#b8d0dc" strokeWidth="2">
            <path d="M1 1 L11 11 M11 1 L1 11" />
          </svg>
        </div>
      </div>
      <div className="flex-1 relative overflow-hidden">
        <Canvas />
      </div>
    </div>
  );
}

const Spark = ({ spikes }: { spikes: number[][] }) => {
  const pts: string[] = ["0,37"];
  for (const [x, h] of spikes) {
    pts.push(`${x - 2.5},37`, `${x},${37 - h}`, `${x + 2.5},37`);
  }
  pts.push("96,37");
  return (
    <div className="h-[38px] border border-[#117dbb] bg-white">
      <svg viewBox="0 0 96 38" preserveAspectRatio="none" className="w-full h-full block">
        <path d="M16 0 V38 M32 0 V38 M48 0 V38 M64 0 V38 M80 0 V38 M0 9.5 H96 M0 19 H96 M0 28.5 H96" stroke="#d9eaf4" strokeWidth="1" fill="none" />
        <polygon points={pts.join(" ")} fill="rgba(17,125,187,0.1)" stroke="#117dbb" strokeWidth="0.9" />
      </svg>
    </div>
  );
};

const cores: number[][][] = [
  [[14, 8], [22, 2], [28, 4], [37, 3], [50, 2], [65, 12], [70, 6], [78, 3], [94, 5]],
  [[2, 22], [24, 16], [34, 13], [62, 3], [68, 22], [74, 3], [80, 4], [85, 4]],
  [[10, 20], [23, 36], [35, 8], [43, 13], [52, 3], [65, 10], [72, 3], [85, 13], [94, 3]],
  [[6, 36], [17, 6], [66, 9], [73, 13], [86, 24]],
  [[12, 16], [27, 14], [40, 20], [50, 4], [63, 17], [72, 3], [84, 3], [92, 4]],
  [[5, 12], [20, 30], [26, 8], [36, 6], [40, 14], [46, 34], [55, 14], [60, 10], [66, 8], [72, 6], [78, 12], [90, 34]],
  [[2, 36], [8, 10], [24, 6], [30, 30], [38, 8], [58, 28], [66, 8], [75, 8], [82, 6], [94, 10]],
  [[3, 20], [7, 30], [13, 38], [18, 30], [22, 24], [26, 38], [32, 12], [36, 30], [40, 26], [45, 36], [50, 34], [55, 38], [60, 14], [64, 36], [70, 10], [75, 38], [80, 16], [85, 36], [90, 6], [94, 34]],
  [[4, 3], [10, 4], [16, 6], [22, 5], [29, 8], [36, 4], [45, 3], [56, 5], [64, 6], [74, 5], [84, 11], [94, 8]],
  [[12, 2], [34, 3], [60, 3], [72, 4], [92, 5]],
  [[8, 1], [40, 2], [62, 5], [68, 14], [84, 3]],
  [[64, 1]],
  [[16, 1], [65, 1], [68, 3]],
  [[10, 1], [20, 1], [30, 1], [40, 1], [50, 1], [60, 1]],
  [[41, 9], [67, 3]],
  [[36, 5], [64, 10], [82, 3], [86, 3]],
];

const perf = [
  { h: "h-[60px]", thumb: "h-[40px] border-[#117dbb]", name: "CPU", lines: ["9%\u00a0\u00a03.38 GHz"], active: true, kind: "cpu" },
  { h: "h-[60px]", thumb: "h-[40px] border-[#8b12ae]", name: "内存", lines: ["10.4/32.0 GB (32%)"], kind: "mem" },
  { h: "h-[70px]", thumb: "h-[50px] border-[#4da60c]", name: "磁盘 0 (C: D:)", lines: ["SSD", "0%"], kind: "disk" },
  { h: "h-[70px]", thumb: "h-[50px] border-[#4da60c]", name: "磁盘 1 (E:)", lines: ["HDD", "0%"] },
  { h: "h-[70px]", thumb: "h-[50px] border-[#a74f01]", name: "以太网", lines: ["以太网", "发送: 688\u00a0\u00a0接收: 56.0 K"], kind: "eth" },
  { h: "h-[70px]", thumb: "h-[50px] border-[#117dbb]", name: "GPU 0", lines: ["Radeon (TM) RX...", "0%\u00a0\u00a0(48 °C)"] },
];

const specs = [
  ["基准速度:", "3.40 GHz"],
  ["插槽:", "1"],
  ["内核:", "8"],
  ["逻辑处理器:", "16"],
  ["虚拟化:", "已禁用"],
  ["Hyper-V 支持:", "是"],
  ["L1 缓存:", "768 KB"],
  ["L2 缓存:", "4.0 MB"],
  ["L3 缓存:", "16.0 MB"],
];

const Thumb = ({ kind }: { kind?: string }) => {
  if (kind === "cpu")
    return (
      <svg viewBox="0 0 58 38" preserveAspectRatio="none" className="w-full h-full block">
        <polygon points="0,36 16,36 17,34 18,36 38,36 40,33 42,36 58,36 58,38 0,38" fill="#d3e7f3" stroke="#117dbb" strokeWidth="0.8" />
      </svg>
    );
  if (kind === "mem")
    return (
      <div className="h-full flex flex-col justify-end">
        <div className="h-[12px] bg-[#f4f2f4] border-t border-[#8b12ae]" />
      </div>
    );
  if (kind === "disk")
    return (
      <svg viewBox="0 0 58 48" preserveAspectRatio="none" className="w-full h-full block">
        <path d="M10 48 V46 M14 48 V46 M22 48 V44 M24 48 V46 M32 48 V46 M40 48 V45 M42 48 V44 M45 48 V46 M50 48 V46" stroke="#4da60c" />
      </svg>
    );
  if (kind === "eth")
    return (
      <svg viewBox="0 0 58 48" preserveAspectRatio="none" className="w-full h-full block">
        <path d="M0 13.5 H58" stroke="#dfa679" strokeWidth="1" />
        <path d="M0 47 L6 45 L8 42 L10 44 L12 38 L14 44 L16 36 L18 34 L20 39 L22 34 L24 42 L26 36 L28 44 L30 40 L34 44 L36 42 L40 46 L44 45 L50 47 L58 47" stroke="#c98351" fill="#f7e9df" strokeWidth="0.8" />
      </svg>
    );
  return null;
};

function PerfList() {
  return (
    <div className="w-[211px] shrink-0 pl-[4px] pr-[3px] pt-[10px] overflow-hidden">
      {perf.map((p) => (
        <div key={p.name} className={`${p.h} flex pl-[10px] ${p.active ? "bg-[#cce8ff]" : ""}`}>
          <div className={`w-[60px] mt-[10px] bg-white border shrink-0 ${p.thumb}`}>
            <Thumb kind={p.kind} />
          </div>
          <div className="ml-[10px] pt-[6px] min-w-0 whitespace-nowrap">
            <div className="h-[20px] text-[16px] leading-[20px] text-[#111]">{p.name}</div>
            {p.lines.map((l) => (
              <div key={l} className="h-[17px] text-[12.5px] leading-[17px] text-[#333]">{l}</div>
            ))}
          </div>
        </div>
      ))}
    </div>
  );
}

const Stat = ({ w, label, value }: { w: string; label: string; value: string }) => (
  <div className={w}>
    <div className="h-[20px] text-[12px] leading-[20px] text-[#707070] whitespace-nowrap">{label}</div>
    <div className="h-[24px] text-[20.5px] leading-[24px] text-[#111] whitespace-nowrap">{value}</div>
  </div>
);

function TaskManager() {
  return (
    <div className="absolute left-[208px] top-[433px] w-[665px] h-[591px] bg-white border border-[#6e6e6e] shadow-[0_6px_24px_rgba(0,0,0,0.35)] flex flex-col text-[#111]">
      <div className="h-[28px] shrink-0 flex items-center pl-[9px] text-[12px]">
        <svg viewBox="0 0 16 16" className="w-[16px] h-[16px]">
          <rect x="3" y="1" width="12" height="10" fill="#dbeaf4" stroke="#777" />
          <path d="M4 8 L7 5 L9 7 L13 3" stroke="#2a7ab8" fill="none" />
          <rect x="1" y="4" width="4" height="11" fill="#bbb" stroke="#777" />
          <path d="M5 13 H12 V15 H5Z" fill="#aaa" />
        </svg>
        <span className="ml-[4px] text-[#222]">任务管理器</span>
        <span className="ml-auto w-[10px] h-px bg-black mr-[36px]" />
        <span className="w-[10px] h-[11px] border border-black mr-[35px]" />
        <svg viewBox="0 0 11 11" className="w-[11px] h-[11px] mr-[17px]" fill="none" stroke="#111">
          <path d="M0.5 0.5 L10.5 10.5 M10.5 0.5 L0.5 10.5" />
        </svg>
      </div>
      <div className="h-[21px] shrink-0 flex items-center text-[12px] pl-[6px] text-[#222]">
        <span className="w-[53px]">文件(<u>F</u>)</span>
        <span className="w-[56px]">选项(<u>O</u>)</span>
        <span>查看(<u>V</u>)</span>
      </div>
      <div className="h-[28px] shrink-0 border-t-2 border-[#f2f2f2] flex items-end pl-[3px] border-b border-b-[#d9d9d9] text-[12px] text-[#222]">
        <span className="w-[33px] h-[22px] bg-[#f0f0f0] border border-b-0 border-[#d9d9d9] flex items-center justify-center">进程</span>
        <span className="w-[39px] h-[26px] -mb-px bg-white border border-b-0 border-[#d9d9d9] flex items-center justify-center">性能</span>
        <span className="w-[82px] h-[22px] bg-[#f0f0f0] border border-b-0 border-[#d9d9d9] flex items-center justify-center">应用历史记录</span>
        <span className="w-[36px] h-[22px] bg-[#f0f0f0] border border-l-0 border-b-0 border-[#d9d9d9] flex items-center justify-center">启动</span>
        <span className="w-[36px] h-[22px] bg-[#f0f0f0] border border-l-0 border-b-0 border-[#d9d9d9] flex items-center justify-center">用户</span>
        <span className="w-[61px] h-[22px] bg-[#f0f0f0] border border-l-0 border-b-0 border-[#d9d9d9] flex items-center justify-center">详细信息</span>
        <span className="w-[33px] h-[22px] bg-[#f0f0f0] border border-l-0 border-b-0 border-[#d9d9d9] flex items-center justify-center">服务</span>
      </div>
      <div className="h-[462px] shrink-0 flex">
        <PerfList />
        <div className="w-px bg-[#d9d9d9] mt-[20px] shrink-0" />
        <div className="flex-1 pl-[25px] pr-[25px] pt-[15px] min-w-0">
          <div className="h-[36px] flex items-baseline whitespace-nowrap">
            <span className="w-[79px] text-[30px] leading-[36px]">CPU</span>
            <span className="text-[16.5px] leading-[36px]">AMD Ryzen 7 1700X Eight-Core Processor</span>
          </div>
          <div className="h-[22px] ml-[3px] flex items-center justify-between text-[11px] text-[#707070]">
            <span>60 秒内的利用率 %</span>
            <span>100%</span>
          </div>
          <div className="ml-[3px] grid grid-cols-4 gap-[4px]">
            {cores.map((c, i) => (
              <Spark key={i} spikes={c} />
            ))}
          </div>
          <div className="mt-[27px] flex">
            <div className="w-[209px] shrink-0">
              <div className="flex">
                <Stat w="w-[57px]" label="利用率" value="9%" />
                <Stat w="w-[68px]" label="速度" value="3.38 GHz" />
              </div>
              <div className="flex mt-[8px]">
                <Stat w="w-[57px]" label="进程" value="202" />
                <Stat w="w-[68px]" label="线程" value="2972" />
                <Stat w="w-[70px]" label="句柄" value="169341" />
              </div>
              <div className="mt-[7px]">
                <Stat w="w-full" label="正常运行时间" value="8:07:49:21" />
              </div>
            </div>
            <div className="grid grid-cols-[93px_1fr] auto-rows-[20px] items-center text-[12px]">
              {specs.map(([k, v]) => (
                <div key={k} className="contents">
                  <span className="text-[#707070] whitespace-nowrap">{k}</span>
                  <span className="text-[#222]">{v}</span>
                </div>
              ))}
            </div>
          </div>
        </div>
      </div>
      <div className="flex-1 flex items-center pl-[9px] pt-[2px] text-[12.5px]">
        <span className="w-[18px] h-[18px] rounded-full border border-[#aaa] flex items-center justify-center">
          <svg viewBox="0 0 10 6" className="w-[9px] h-[6px]" fill="none" stroke="#888"><path d="M1 5 L5 1 L9 5" /></svg>
        </span>
        <span className="ml-[7px] w-[76px] text-[#222]">简略信息(<u>D</u>)</span>
        <span className="w-px h-[18px] bg-[#d9d9d9]" />
        <svg viewBox="0 0 16 16" className="w-[16px] h-[18px] ml-[8px]">
          <circle cx="8" cy="8" r="7" fill="#eee" stroke="#777" strokeWidth="1.4" />
          <path d="M5 4 L9 11" stroke="#c22" strokeWidth="1.6" />
        </svg>
        <span className="ml-[6px] text-[12px] text-[#0066cc]">打开资源监视器</span>
      </div>
    </div>
  );
}

function BackDialog() {
  return (
    <div className="absolute left-[247px] top-[421px] w-[328px] h-[30px] bg-[#06628a] text-white flex items-start pl-[8px] pt-[5px] text-[13px] leading-none">
      <svg viewBox="0 0 16 16" className="w-[14px] h-[14px]" fill="none" stroke="#fff" strokeWidth="2">
        <circle cx="8" cy="8" r="4" />
      </svg>
      <span className="ml-[8px]">标准</span>
      <span className="ml-auto mr-[56px] w-[10px] h-[10px] rounded-full border-2 border-l-transparent border-white" />
      <span className="mr-[14px] font-bold">?</span>
      <span className="mr-[8px] font-bold">×</span>
    </div>
  );
}

function JobDialog() {
  return (
    <div className="absolute left-[249px] top-[1262px] w-[244px] h-[115px] bg-[#f0f0f0] border border-[#aaa] flex flex-col">
      <div className="h-[28px] shrink-0 -mx-px -mt-px bg-[#056189] flex items-center pl-[9px] text-[13px] text-[#dbe9f0]">
        工作进行中
        <span className="ml-auto w-[8px] h-[2px] bg-white mt-[7px]" />
        <span className="ml-[14px] w-[12px] h-[11px] border border-[#c8c8c8]" />
        <svg viewBox="0 0 11 11" className="w-[11px] h-[11px] ml-[11px] mr-[10px]" fill="none" stroke="#d0d0d0" strokeWidth="1.5">
          <path d="M0.5 0.5 L10.5 10.5 M10.5 0.5 L0.5 10.5" />
        </svg>
      </div>
      <div className="flex pl-[14px] pt-[9px]">
        <svg viewBox="0 0 24 30" className="w-[24px] h-[30px] shrink-0">
          <path d="M2 2 H21 V7 L14 14 L21 21 V27 H2 V21 L9 14 L2 7Z" fill="#c4c4c4" stroke="#000080" strokeWidth="2.4" />
          <polygon points="7,11 16,11 11.5,16" fill="#f6f000" />
          <polygon points="11.5,16 17,24 6,24" fill="#f6f000" />
          <path d="M23 4 V29 H4" stroke="#9a9a9a" strokeWidth="2" fill="none" />
        </svg>
        <div className="ml-[17px] text-[12px] leading-[18px] text-[#222]">
          单击“停止”可中断
          <br />
          此操作。
        </div>
      </div>
      <div className="self-center mt-[5px] mr-[9px] w-[63px] h-[25px] bg-[#056189] flex items-center justify-center text-[12px] text-[#d5e8f2]">
        停止(<u>S</u>)
      </div>
    </div>
  );
}

const Grip = () => (
  <div className="grid grid-cols-2 gap-[2px] w-[8px] shrink-0">
    {Array.from({ length: 12 }, (_, i) => (
      <span key={i} className="w-[2px] h-[2px] bg-[#bdbdbd]" />
    ))}
  </div>
);

function Widget() {
  return (
    <>
      <div className="absolute left-[2350px] top-[1296px] w-[108px] h-[41px] rounded-r-[20px] bg-[#f6f6f6] shadow-[0_0_3px_rgba(0,0,0,0.3)] text-[11px] text-[#111]">
        <div className="h-full flex items-center pl-[25px]">
          <div className="w-[50px] leading-[16px]">
            <div className="flex justify-between">
              <span className="text-[#2a8cf0]">↑</span>
              <span>104K/s</span>
            </div>
            <div className="flex justify-between">
              <span className="text-[#1aa84a]">↓</span>
              <span>3.6K/s</span>
            </div>
          </div>
          <span className="ml-[7px] w-[16px] h-[16px] rounded-full bg-[#2f95f5] text-white flex items-center justify-center text-[14px] leading-none font-bold relative">
            +
            <span className="absolute -top-[2px] -right-[3px] w-[7px] h-[7px] rounded-full bg-[#f45a3c]" />
          </span>
        </div>
      </div>
      <div className="absolute left-[2310px] top-[1284px] w-[62px] h-[62px] rounded-full border-[6px] border-[#45d873] shadow-[0_0_0_2px_#8ae6a8] bg-[#f6f6f6] flex items-baseline justify-center pt-[10px] text-[#444] font-['Lato',sans-serif] font-light">
        <span className="text-[24px] leading-[28px] -tracking-[1px]">32</span>
        <span className="text-[13px] leading-none">%</span>
      </div>
      <svg viewBox="2278 1316 70 79" className="absolute left-[2278px] top-[1316px] w-[70px] h-[79px]">
        <polygon points="2313,1316 2348,1336 2348,1375 2313,1395 2278,1375 2278,1336" fill="#6cc6f6" opacity="0.75" />
        <polygon points="2298,1344 2313,1336 2329,1344 2313,1352" fill="#d2eefc" opacity="0.85" />
        <polygon points="2298,1344 2313,1352 2313,1372 2298,1363" fill="#b4e2fa" opacity="0.9" stroke="#fff" strokeWidth="0.6" />
        <polygon points="2313,1352 2329,1344 2329,1363 2313,1372" fill="#7fc8f0" opacity="0.9" stroke="#fff" strokeWidth="0.6" />
        <path d="M2278 1336 C2300 1320 2330 1325 2332 1350 M2348 1375 C2320 1385 2295 1380 2293 1362" stroke="#fff" strokeWidth="0.8" fill="none" />
      </svg>
    </>
  );
}

export default function App() {
  return (
    <div className="relative w-[2560px] h-[1408px] overflow-hidden bg-white flex flex-col font-['Noto_Sans','Noto_Sans_CJK_SC',sans-serif]">
      <svg className="absolute w-0 h-0">
        <defs>
          <linearGradient id="gry" x1="0" y1="0" x2="0" y2="1">
            <stop offset="0" stopColor="#f4f4f4" />
            <stop offset="1" stopColor="#8e8e8e" />
          </linearGradient>
          <linearGradient id="org" x1="0" y1="0" x2="1" y2="1">
            <stop offset="0" stopColor="#ffb45c" />
            <stop offset="1" stopColor="#e96f0c" />
          </linearGradient>
        </defs>
      </svg>
      <TitleBar />
      <Ribbon />
      <div className="flex-1 min-h-0 flex">
        <LeftStrip />
        <NavPanel />
        <Graphics />
      </div>
      <div className="h-[22px] shrink-0 bg-white border-t-2 border-[#b4b4b4] flex items-center pl-[3px] text-[12px] font-medium text-[#222]">
        <span className="w-[1251px]">选择体以自动判断</span>
        <span>布尔运算将是“求和”。</span>
      </div>
      <div className="h-[8px] shrink-0 overflow-hidden bg-[linear-gradient(90deg,#203844,#1f3542_50%,#1a2840)] flex text-[12px] leading-[24px] text-white">
        <span className="ml-[198px] w-[48px] h-[8px] bg-[#4d6268]" />
        <span className="ml-[1752px] w-[30px]">1257</span>
        <span className="ml-[406px]">10:17</span>
      </div>

      <BackDialog />
      <TaskManager />
      <JobDialog />

      <div className="absolute left-[1403px] top-[741px] w-[162px] h-[34px] bg-[#efefef] border border-[#aaa] flex items-center pl-[2px]">
        <Grip />
      </div>
      <div className="absolute left-[1404px] top-[1341px] w-[45px] h-[29px] bg-[#efefef] border border-[#aaa] flex items-center pl-[2px] text-[12px] text-[#222]">
        <Grip />
        <span className="ml-[7px]">截面</span>
      </div>
      <Widget />
    </div>
  );
}
